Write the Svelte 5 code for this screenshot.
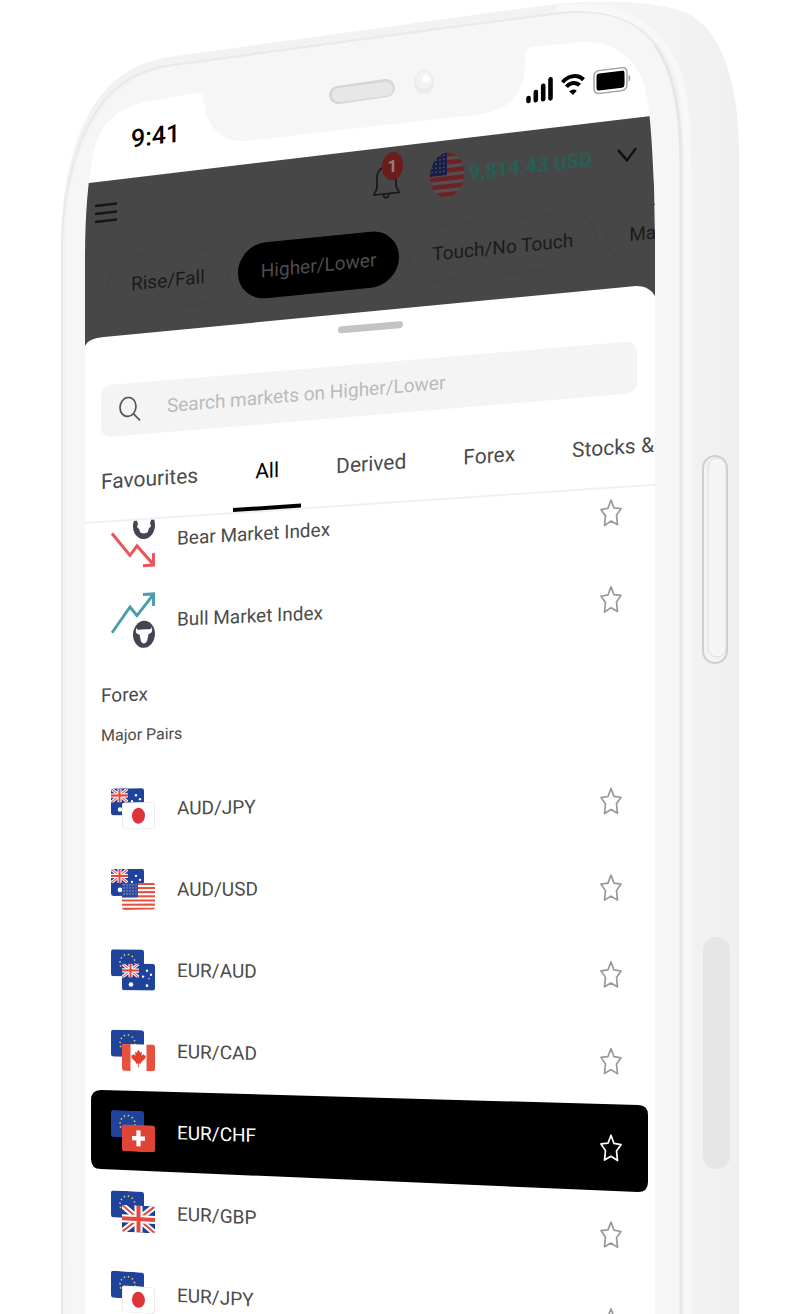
<script>
    const tradeTypes = ['Rise/Fall', 'Higher/Lower', 'Touch/No Touch', 'Max']
    const tabs = ['Favourites', 'All', 'Derived', 'Forex', 'Stocks &']

    const derived = [
        { name: 'Bear Market Index', icon: 'bear', y: 543 },
        { name: 'Bull Market Index', icon: 'bull', y: 623 },
    ]
    const majorPairs = ['AUD/JPY', 'AUD/USD', 'EUR/AUD', 'EUR/CAD', 'EUR/CHF', 'EUR/GBP', 'EUR/JPY']
        .map((name, i) => ({ name, flags: name.split('/'), y: 809 + i * 80 }))

    let tradeType = $state('Higher/Lower')
    let tab = $state('All')
    let market = $state('EUR/CHF')
    let search = $state('')
    let favourites = $state([])

    // rows above the horizon lean up to the right, rows below it lean down
    const horizon = 905
    function tilt(y) {
        return `${(Math.atan((y - horizon) * 0.00016) * 180 / Math.PI).toFixed(2)}deg`
    }

    function toggleFavourite(name) {
        favourites = favourites.includes(name)
            ? favourites.filter(f => f !== name)
            : [...favourites, name]
    }
</script>

{#snippet unionJack()}
    <rect width="33" height="27" fill="#1e3f96" />
    <path d="M0 0L33 27M33 0L0 27" stroke="#fff" stroke-width="6" />
    <path d="M0 0L33 27M33 0L0 27" stroke="#e5483f" stroke-width="2" />
    <path d="M16.500 0V27M0 13.500H33" stroke="#fff" stroke-width="8" />
    <path d="M16.500 0V27M0 13.500H33" stroke="#e5483f" stroke-width="4" />
{/snippet}

{#snippet stripes()}
    <rect width="33" height="27" fill="#fff" />
    {#each [0, 1, 2, 3, 4, 5, 6] as n}
        <rect y={n * 4.15} width="33" height="2.1" fill="#e8503f" />
    {/each}
    <rect width="16" height="14.500" fill="#2c4a9a" />
    {#each [2, 5, 8, 11, 14] as x}
        {#each [2, 5, 8, 11] as y}
            <circle cx={x} cy={y} r="0.600" fill="#c9d4ee" />
        {/each}
    {/each}
{/snippet}

{#snippet flag(code)}
    <g clip-path="url(#flag-shape)">
        {#if code === 'JPY'}
            <rect width="33" height="27" fill="#fff" />
            <ellipse cx="16.500" cy="13.500" rx="6.500" ry="8" fill="#dd3439" />
            <rect x="0.500" y="0.500" width="32" height="26" rx="2" fill="none" stroke="#ececec" />
        {:else if code === 'AUD'}
            <rect width="33" height="27" fill="#1f429b" />
            <svg width="17" height="14" viewBox="0 0 33 27" preserveAspectRatio="none">
                {@render unionJack()}
            </svg>
            <circle cx="9" cy="21" r="2.300" fill="#fff" />
            <circle cx="25" cy="7" r="1.200" fill="#fff" />
            <circle cx="21" cy="13" r="1.200" fill="#fff" />
            <circle cx="29" cy="11" r="1.200" fill="#fff" />
            <circle cx="25" cy="22" r="1.300" fill="#fff" />
            <circle cx="27" cy="15" r="0.700" fill="#fff" />
        {:else if code === 'USD'}
            {@render stripes()}
        {:else if code === 'EUR'}
            <rect width="33" height="27" fill="#1f429b" />
            <ellipse cx="16.500" cy="13.500" rx="7.500" ry="8.500" fill="none" stroke="#d5c95c" stroke-width="1.600" stroke-dasharray="1.500 2.700" />
        {:else if code === 'CAD'}
            <rect width="33" height="27" fill="#fff" />
            <path d="M0 0H8.500V27H0zM24.500 0H33V27H24.500z" fill="#e5503f" />
            <path d="M16.500 5.500l1.800 3 1.700-.8-.5 3.800 2-1.700 1 1.400 1.500.2-.8 2.800-4.300 4 .1 1.300-2.100-.3V23h-.8v-3.800l-2.100.3.1-1.300-4.300-4-.8-2.800 1.500-.2 1-1.400 2 1.700-.5-3.800 1.700.8z" fill="#e5402f" />
        {:else if code === 'CHF'}
            <rect width="33" height="27" fill="#df4436" />
            <path d="M16.500 5.500V21.500M10 13.500H23" stroke="#fff" stroke-width="4.200" />
        {:else}
            {@render unionJack()}
        {/if}
    </g>
{/snippet}

{#snippet favouriteButton(name)}
    <button
        class={`fav ${favourites.includes(name) ? 'saved' : ''}`}
        aria-label={`Favourite ${name}`}
        onclick={() => toggleFavourite(name)}
    >
        <svg width="22" height="28" viewBox="0 0 22 28">
            <path d="M11 1.500L14 9.500L21 10.500L16.500 17L17.500 26.500L11 22.500L4.500 26.500L5.500 17L1 10.500L8 9.500Z" />
        </svg>
    </button>
{/snippet}

<div class="stage">
    <svg class="phone" viewBox="0 0 800 1314" preserveAspectRatio="none" aria-hidden="true">
        <defs>
            <linearGradient id="side" x1="0" x2="1" y1="0" y2="0">
                <stop offset="0" stop-color="#f6f6f6" />
                <stop offset="1" stop-color="#f0f0f0" />
            </linearGradient>
            <linearGradient id="rim" x1="0" x2="0" y1="0" y2="1">
                <stop offset="0" stop-color="#f2f2f4" />
                <stop offset="1" stop-color="#f3f3f3" />
            </linearGradient>
            <clipPath id="flag-shape"><rect width="33" height="27" rx="2.500" /></clipPath>
            <clipPath id="glass">
                <path d="M85 1314V260C85 215 88 180 93 155C100 118 124 106 150 101L196 93C202 92 203 96 204 104C207 128 222 142 245 141C325 132 400 123 476 115C507 111 524 96 525 66C525 52 526 48 533 47L580 42C612 40 637 58 645 88C650 108 652 140 654 185L655 240V1314Z" />
            </clipPath>
        </defs>

        <!-- body and its side wall -->
        <path d="M61 1314V240C62 180 75 135 94 105C113 76 139 61 170 57L430 21L555 4C595 0 655 0 686 13C724 31 739 90 739 152V1314Z" fill="url(#rim)" />
        <path d="M590 2C640 2 670 4 692 16C726 36 739 95 739 152V1314H684V152C684 85 665 35 590 2Z" fill="url(#side)" />
        <path d="M65 1314V240C66 190 78 145 98 115C118 84 144 70 175 66L430 31L560 14C625 6 658 36 670 78C677 105 680 130 680 170V1314Z" fill="#f6f6f6" />
        <path d="M62 1314V240C64 185 77 141 96 112C116 81 142 69 173 65L430 30L560 13C625 5 658 34 671 78C678 105 681 130 681 170V1314" fill="none" stroke="#e9e9eb" stroke-width="2" />
        <path d="M560 8C640 2 674 42 683 95C687 118 688 140 688 180V1314" fill="none" stroke="#f8f8f8" stroke-width="7" stroke-linecap="round" />
        <path d="M655 45C674 72 681 110 681 170V1314" fill="none" stroke="#e6e6e6" stroke-width="3" stroke-linecap="round" />

        <!-- side buttons -->
        <rect x="703" y="456" width="24" height="207" rx="12" fill="#f3f3f3" stroke="#cfcfcf" stroke-width="2" />
        <rect x="708" y="458" width="18" height="199" rx="9" fill="#f5f5f5" stroke="#dedede" />
        <rect x="703" y="937" width="27" height="232" rx="13" fill="#e6e6e6" />

        <!-- glass, dimmed page and bottom sheet -->
        <g clip-path="url(#glass)">
            <rect width="800" height="1314" fill="#fff" />
            <path d="M80 184L660 115V360H80Z" fill="#474747" />
            <path d="M85 1314V346C88 340 94 338 104 337L636 286C647 286 652 291 655 296V1314Z" fill="#fff" />
        </g>

        <!-- earpiece and camera -->
        <path d="M338 95L386 88" stroke="#d6d6d6" stroke-width="18" stroke-linecap="round" />
        <path d="M339 95L386 89" stroke="#e7e7e7" stroke-width="14" stroke-linecap="round" />
        <ellipse cx="424" cy="82" rx="10" ry="12" fill="#ececec" />
        <ellipse cx="424" cy="80" rx="8" ry="9" fill="#f3f3f3" />
        <circle cx="426" cy="79" r="4" fill="#fdfdfd" />
    </svg>

    <div class="display">
        <div class="row status" style:--tilt={tilt(144)}>
            <time>9:41</time>
            <svg class="push" width="27" height="27" viewBox="0 0 27 27">
                <path d="M2.500 21V24M9.800 16V24M17.200 10.500V24M24.500 5V24" stroke="#000" stroke-width="4.600" stroke-linecap="round" />
            </svg>
            <svg width="24" height="24" viewBox="0 0 24 24" fill="none" stroke="#000" stroke-width="4">
                <path d="M1.500 8.500C7 2 17 2 22.500 8.500" />
                <path d="M5.500 13.500C9 9.500 15 9.500 18.500 13.500" />
                <path d="M12 22.500L8.200 18.500C10.500 16.400 13.500 16.400 15.800 18.500Z" fill="#000" stroke="none" />
            </svg>
            <svg width="38" height="25" viewBox="0 0 38 25">
                <rect x="1" y="1" width="33" height="23" rx="5" fill="none" stroke="#a5a5a5" stroke-width="1.500" />
                <rect x="3.500" y="4" width="28" height="17" rx="2.500" />
                <path d="M35.500 9C38 10 38 15 35.500 16Z" fill="#a5a5a5" />
            </svg>
        </div>

        <div class="row header" style:--tilt={tilt(215)}>
            <button class="menu" aria-label="Menu">
                <svg width="22" height="22" viewBox="0 0 22 22">
                    <path d="M0 3H22M0 11H22M0 19H22" stroke="#161616" stroke-width="2.500" />
                </svg>
            </button>
            <button class="bell push" aria-label="Notifications">
                <svg width="27" height="34" viewBox="0 0 27 34" fill="none" stroke="#1a1a1a" stroke-width="1.800">
                    <path d="M13 2C7 2 4 7 4 12V22C4 25 1 26 1 29H26C26 26 23 25 23 22V12C23 7 19 2 13 2Z" />
                    <path d="M10.500 30C11 34 15.500 34 16 30" />
                </svg>
                <span class="badge">1</span>
            </button>
            <button class="account">
                <svg width="34" height="46" viewBox="0 0 34 46">
                    <defs><clipPath id="oval"><ellipse cx="17" cy="23" rx="17" ry="22.500" /></clipPath></defs>
                    <g clip-path="url(#oval)">
                        <rect width="34" height="46" fill="#5a4b4d" />
                        {#each [0, 1, 2, 3, 4, 5] as n}
                            <rect y={n * 8} width="34" height="4.500" fill="#6b2226" />
                        {/each}
                        <rect width="17" height="23" fill="#1a1e45" />
                        {#each [2, 6, 10, 14] as x}
                            {#each [3, 7, 11, 15, 19] as y}
                                <circle cx={x} cy={y} r="0.900" fill="#4c5070" />
                            {/each}
                        {/each}
                    </g>
                </svg>
                <span class="amount">9,814.43 USD</span>
                <svg class="chevron" width="20" height="16" viewBox="0 0 20 16">
                    <path d="M1 2L10 13L19 2" fill="none" stroke="#111" stroke-width="2.500" />
                </svg>
            </button>
        </div>

        <div class="row chips" style:--tilt={tilt(288)}>
            {#each tradeTypes as type}
                <button class={`chip ${tradeType === type ? 'selected' : ''}`} onclick={() => tradeType = type}>{type}</button>
            {/each}
        </div>

        <div class="row grip" style:--tilt={tilt(352)}><span></span></div>

        <div class="row search" style:--tilt={tilt(385)}>
            <label>
                <svg width="22" height="26" viewBox="0 0 22 26" fill="none" stroke="#555" stroke-width="1.700">
                    <ellipse cx="9" cy="10.500" rx="8" ry="9.500" />
                    <path d="M14.500 18L21 25" />
                </svg>
                <input type="text" bind:value={search} placeholder="Search markets on Higher/Lower" aria-label="Search markets" />
            </label>
        </div>

        <nav class="row tabs" style:--tilt={tilt(485)}>
            {#each tabs as name}
                <button class={`tab ${tab === name ? 'active' : ''}`} onclick={() => tab = name}>{name}</button>
            {/each}
        </nav>

        <ul class="markets">
            {#each derived as item}
                <li class="row market" style:--tilt={tilt(item.y)}>
                    <button class="pick" onclick={() => market = item.name}>
                        <svg width="44" height="56" viewBox="0 0 44 56" fill="none" stroke-width="3">
                            {#if item.icon === 'bear'}
                                <path d="M1 20L19 43L26 34L42 53M32 54H42.500V42" stroke="#e8555a" />
                                <ellipse cx="33" cy="14" rx="11" ry="13.500" fill="#414652" />
                                <path d="M27 5L39 5L40 9L39 12L40 15L38 17L36.500 21L33 22L29.500 21L28 17L26 15L27 12L26 9Z" fill="#fff" />
                            {:else}
                                <path d="M1 39L19 14L26 23L42 3M32 2H42.500V14" stroke="#4a9dab" />
                                <ellipse cx="33" cy="42" rx="11" ry="13.500" fill="#414652" />
                                <path d="M25.500 35C26 38 29 37 30 37H36C37 37 40 38 40.500 35C42 39 41 41 37.500 42L36 49L34 51H32L30 49L28.500 42C25 41 24 39 25.500 35Z" fill="#fff" />
                            {/if}
                        </svg>
                        {item.name}
                    </button>
                    {@render favouriteButton(item.name)}
                </li>
            {/each}

            <li class="group">
                <h2 class="row" style:--tilt={tilt(695)}>Forex</h2>
                <h3 class="row" style:--tilt={tilt(735)}>Major Pairs</h3>
            </li>

            {#each majorPairs as pair}
                <li class={`market ${market === pair.name ? 'current' : ''}`} style:--tilt={tilt(pair.y)}>
                    {#if market === pair.name}
                        <svg class="highlight" viewBox="0 0 557 102" preserveAspectRatio="none" aria-hidden="true">
                            <path d="M10 0L547 15Q557 15 557 25V92Q557 102 547 102L10 79Q0 79 0 69V10Q0 0 10 0Z" />
                        </svg>
                    {/if}
                    <div class="row market-line">
                        <button class="pick" onclick={() => market = pair.name}>
                            <svg width="44" height="41" viewBox="0 0 44 41">
                                {@render flag(pair.flags[0])}
                                <g transform="translate(11 14)">{@render flag(pair.flags[1])}</g>
                            </svg>
                            {pair.name}
                        </button>
                        {@render favouriteButton(pair.name)}
                    </div>
                </li>
            {/each}
        </ul>
    </div>
</div>

<style>
    :global(body) {
        margin: 0;
        background: #fff;
    }
    .stage {
        position: relative;
        height: 100vh;
        padding: 0 145px 0 85px;
        box-sizing: border-box;
        overflow: hidden;
        font-family: Roboto, sans-serif;
        font-size: 19px;
        color: #4b4b4b;
    }
    .phone {
        position: absolute;
        inset: 0;
        width: 100%;
        height: 100%;
    }
    .display {
        position: relative;
        height: 100%;
        padding-top: 101px;
        box-sizing: border-box;
        overflow: hidden;
    }
    .row {
        display: flex;
        align-items: center;
        transform: skewY(var(--tilt));
        transform-origin: 0 50%;
    }
    button {
        padding: 0;
        border: 0;
        background: none;
        font: inherit;
        color: inherit;
        white-space: nowrap;
        cursor: pointer;
    }
    svg {
        flex-shrink: 0;
    }
    .push {margin-left: auto;}

    .status {
        height: 86px;
        gap: 8px;
        padding: 0 24px 0 46px;
    }
    .status time {
        font-size: 25px;
        font-weight: 500;
        color: #000;
    }

    /******** DIMMED PAGE ********/
    .header {
        height: 56px;
        padding: 0 18px 0 10px;
        gap: 30px;
    }
    .menu {
        display: flex;
        align-items: center;
        height: 56px;
        padding-right: 16px;
        border-right: 1px solid #434343;
    }
    .bell {
        position: relative;
        display: flex;
    }
    .badge {
        position: absolute;
        left: 9px;
        top: -12px;
        width: 21px;
        height: 28px;
        border-radius: 50%;
        background: #6b1c1c;
        color: #8f8080;
        font-size: 17px;
        font-weight: 700;
        line-height: 28px;
    }
    .account {
        display: flex;
        align-items: center;
        gap: 5px;
    }
    .amount {
        color: #275f55;
        font-size: 20px;
        font-weight: 700;
    }
    .chevron {margin-left: 20px;}
    .chips {
        height: 90px;
        gap: 10px;
        padding-left: 23px;
        color: #1b1b1b;
    }
    .chip {
        height: 56px;
        padding: 0 22px;
        border: 1px solid #444;
        border-radius: 28px;
    }
    .chip.selected {
        background: #000;
        border-color: #000;
        color: #4d4d4d;
    }

    /******** SHEET ********/
    .grip {
        justify-content: center;
        height: 38px;
    }
    .grip span {
        width: 65px;
        height: 7px;
        border-radius: 4px;
        background: #c3c3c3;
    }
    .search {
        height: 77px;
        padding: 6px 18px 0 16px;
        box-sizing: border-box;
    }
    .search label {
        display: flex;
        align-items: center;
        flex: 1;
        gap: 26px;
        height: 52px;
        padding: 0 18px;
        border-radius: 10px;
        background: #f4f4f4;
    }
    .search input {
        flex: 1;
        min-width: 0;
        padding: 0;
        border: 0;
        outline: 0;
        background: none;
        font: inherit;
        color: #333;
    }
    .search input::placeholder {color: #bbb;}
    .tabs {
        z-index: 1;
        position: relative;
        height: 76px;
        gap: 13px;
        box-sizing: border-box;
        border-bottom: 2px solid #f0f0f0;
        background: #fff;
        font-size: 21px;
    }
    .tab {
        align-self: stretch;
        padding: 0 22px;
        border-bottom: 4px solid transparent;
    }
    .tab:first-child {padding-left: 16px;}
    .tab.active {
        border-color: #000;
        color: #000;
    }

    /******** MARKETS ********/
    .markets {
        margin: -21px 0 0;
        padding: 0;
        list-style: none;
    }
    .market {
        position: relative;
        height: 80px;
    }
    .market-line {height: 80px;}
    .highlight {
        position: absolute;
        left: 6px;
        top: 1px;
        width: calc(100% - 13px);
        height: 102px;
    }
    .pick {
        display: flex;
        align-items: center;
        flex: 1;
        gap: 22px;
        height: 80px;
        padding-left: 26px;
    }
    .fav {
        display: flex;
        margin-right: 33px;
    }
    .fav path {
        fill: none;
        stroke: #999;
        stroke-width: 1.7;
        stroke-linejoin: round;
    }
    .fav.saved path {fill: #ffad3a;}
    .current {color: #fff;}
    .current .fav path {stroke: #fff;}
    .group {
        padding: 12px 16px 14px;
    }
    .group h2, .group h3 {
        height: 40px;
        margin: 0;
        font-size: 19px;
        font-weight: 400;
    }
    .group h3 {font-size: 16px;}
</style>
